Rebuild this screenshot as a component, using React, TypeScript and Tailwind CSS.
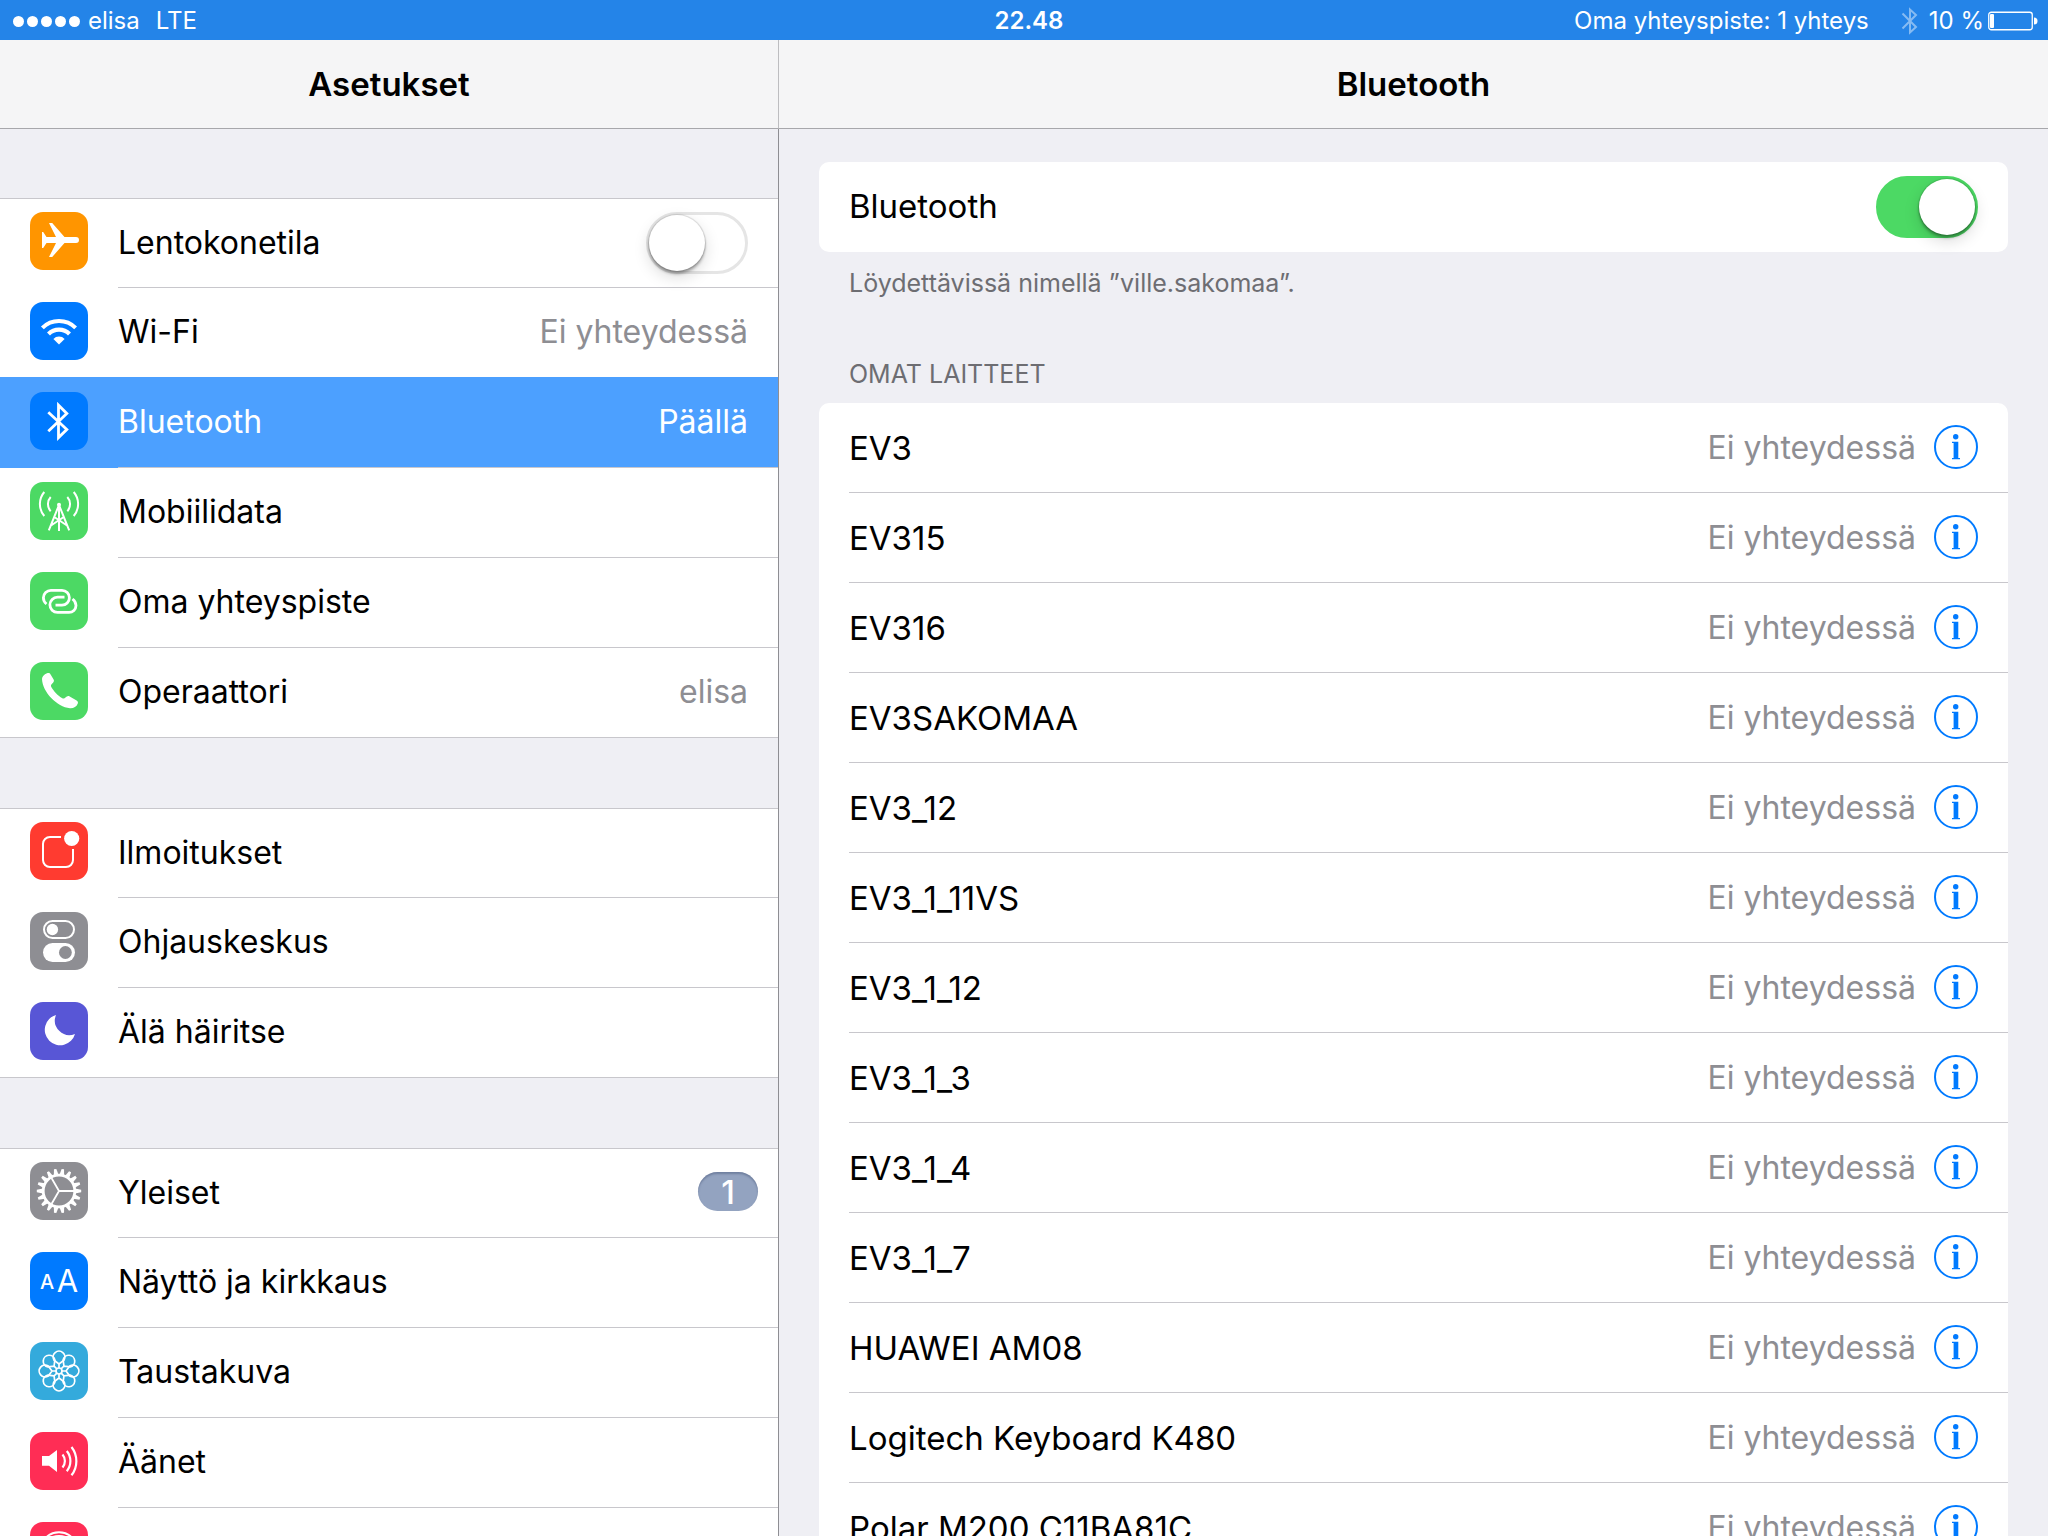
import React, { type ReactNode } from 'react';

const stroke = { fill: 'none', stroke: 'white' } as const;

function Plane() {
  return <path fill="white" d="M12 20h1.2l3.3 5H26L19 11h3.2l12.3 14h11.5a3 3 0 0 1 0 6H34.500L22.200 45H19l7-14h-9.500l-3.300 5H12z" />;
}

function Wifi() {
  return (
    <g>
      <path {...stroke} strokeWidth="4" d="M12.400 25.900a23.500 23.500 0 0 1 33.200 0" />
      <path {...stroke} strokeWidth="4.200" d="M18.500 32a14.800 14.800 0 0 1 21 0" />
      <path fill="white" d="M23.400 36.900a8 8 0 0 1 11.200 0L29 42.500z" />
    </g>
  );
}

function Bluetooth() {
  return <path {...stroke} strokeWidth="2.800" d="M18.300 20.300 36.800 37.600 28.500 45.600V13.200l8.300 8.200L18.300 39.200" />;
}

function Antenna() {
  return (
    <g {...stroke} strokeWidth="2">
      <circle cx="29" cy="22.700" r="2" fill="white" stroke="none" />
      <path d="M29 23 18.800 48.300M29 23l10.200 25.300M29 23v26M21 43.500l12-8M37 43.500l-12-8" />
      <path d="M20.700 15a10.500 10.500 0 0 0 0 14.200M37.300 15a10.500 10.500 0 0 1 0 14.200" />
      <path d="M14.300 10a18.500 18.500 0 0 0 0 24M43.700 10a18.500 18.500 0 0 1 0 24" />
    </g>
  );
}

function Hotspot() {
  return (
    <g {...stroke} strokeWidth="2.800">
      <path d="M16.500 32c-2-1.500-3.100-3.700-3.100-6.200a7.500 7.500 0 0 1 7.500-7.400H32a7.400 7.400 0 0 1 0 14.800h-6.500" />
      <path d="M34.500 25.200h-7a7.600 7.600 0 0 0 0 15.200H39a7 7 0 0 0 7-6.900c0-3-1.500-5-3.500-6.500" />
    </g>
  );
}

function Phone() {
  return <path fill="white" d="M12 17C12 14.500 14 12.500 17 11.200C18.600 10.600 19.800 11 20.600 12.400L23.600 17.600C24.200 18.800 24 19.600 23.200 20.600L21.400 22.600C20.800 23.400 20.900 24.200 21.300 25C23.500 29 28 33.700 32.300 36.300C33.200 36.800 34 36.700 34.800 36.100L36.800 34.500C37.800 33.800 38.600 33.800 39.700 34.400L46.600 38.600C48 39.400 48.300 40.400 47.700 41.800C46.500 44.800 43.500 46.400 40 46.200C27 45 12.500 30 12 17Z" />;
}

function Notifications() {
  return (
    <g>
      <path {...stroke} strokeWidth="2" d="M31 15H20a7 7 0 0 0-7 7v16a7 7 0 0 0 7 7h16a7 7 0 0 0 7-7V27" />
      <circle cx="41.700" cy="16.500" r="7.600" fill="white" />
    </g>
  );
}

function ControlCenter() {
  return (
    <g>
      <rect {...stroke} strokeWidth="2" x="14" y="9" width="30" height="17" rx="8.500" />
      <circle cx="22.400" cy="17.500" r="5.700" fill="white" />
      <rect x="13" y="31" width="32" height="19" rx="9.500" fill="white" />
      <circle cx="35.400" cy="40.500" r="6.400" fill="#8e8e93" />
    </g>
  );
}

function Moon() {
  return <path fill="white" d="M26 13A15.400 15.400 0 1 0 45 32A14.600 14.600 0 0 1 26 13Z" />;
}

const teeth = Array.from({ length: 18 }, (_, i) => i * 20);

function Gear() {
  return (
    <g>
      <circle {...stroke} strokeWidth="2.800" cx="29" cy="29" r="15.800" />
      {teeth.map((a) => (
        <path key={a} fill="white" transform={`rotate(${a} 29 29)`} d="M45 26.600l6.200 1.200v2.400L45 31.400z" />
      ))}
      <path {...stroke} strokeWidth="1.800" d="M29 29h15M29 29l-7.500-13M29 29l-7.500 13" />
    </g>
  );
}

function TextSize() {
  return (
    <g fill="white" fontFamily="Inter, sans-serif" fontWeight="500">
      <text x="17" y="37" fontSize="20" textAnchor="middle">A</text>
      <text x="37.500" y="40" fontSize="31" fontWeight="400" textAnchor="middle">A</text>
    </g>
  );
}

const petals = Array.from({ length: 8 }, (_, i) => i * 45);

function Flower() {
  return (
    <g {...stroke} strokeWidth="1.700">
      <circle cx="29" cy="29" r="3" />
      {petals.map((a) => (
        <path key={a} transform={`rotate(${a} 29 29)`} d="M29 26V22L24 18.200A5.900 5.900 0 1 1 34 18.200L29 22" />
      ))}
    </g>
  );
}

function Sound() {
  return (
    <g>
      <path fill="white" d="M12 24h7l8-6v22l-8-6.300h-7z" />
      <path {...stroke} strokeWidth="2.200" d="M32.500 22.500a10 10 0 0 1 0 13M36.800 19a16 16 0 0 1 0 20.200M41.500 15a23 23 0 0 1 0 28.300" />
    </g>
  );
}

function Fingerprint() {
  return (
    <g {...stroke} strokeWidth="1.800">
      <path d="M17 14.500a19 19 0 0 1 24 0M14 22a18 18 0 0 1 30 0M15 32a14 14 0 0 1 28 0M20 36a9 9 0 0 1 18-4v8M29 32v12" />
    </g>
  );
}

type Item = {
  label: string;
  color: string;
  icon: ReactNode;
  value?: string;
  badge?: number;
  toggle?: boolean;
  selected?: boolean;
  iconOnly?: boolean;
};

const groups: Item[][] = [
  [
    { label: 'Lentokonetila', color: 'bg-[#ff9500]', icon: <Plane />, toggle: true },
    { label: 'Wi-Fi', color: 'bg-[#007aff]', icon: <Wifi />, value: 'Ei yhteydessä' },
    { label: 'Bluetooth', color: 'bg-[#007aff]', icon: <Bluetooth />, value: 'Päällä', selected: true },
    { label: 'Mobiilidata', color: 'bg-[#4cd964]', icon: <Antenna /> },
    { label: 'Oma yhteyspiste', color: 'bg-[#4cd964]', icon: <Hotspot /> },
    { label: 'Operaattori', color: 'bg-[#4cd964]', icon: <Phone />, value: 'elisa' },
  ],
  [
    { label: 'Ilmoitukset', color: 'bg-[#ff3b30]', icon: <Notifications /> },
    { label: 'Ohjauskeskus', color: 'bg-[#8e8e93]', icon: <ControlCenter /> },
    { label: 'Älä häiritse', color: 'bg-[#5856d6]', icon: <Moon /> },
  ],
  [
    { label: 'Yleiset', color: 'bg-[#8e8e93]', icon: <Gear />, badge: 1 },
    { label: 'Näyttö ja kirkkaus', color: 'bg-[#007aff]', icon: <TextSize /> },
    { label: 'Taustakuva', color: 'bg-[#34aadc]', icon: <Flower /> },
    { label: 'Äänet', color: 'bg-[#ff2d55]', icon: <Sound /> },
    { label: 'Touch ID', color: 'bg-[#ff2d55]', icon: <Fingerprint />, iconOnly: true },
  ],
];

const devices = [
  'EV3', 'EV315', 'EV316', 'EV3SAKOMAA', 'EV3_12', 'EV3_1_11VS', 'EV3_1_12', 'EV3_1_3',
  'EV3_1_4', 'EV3_1_7', 'HUAWEI AM08', 'Logitech Keyboard K480', 'Polar M200 C11BA81C',
];

function Switch({ id, on = false }: { id: string; on?: boolean }) {
  return (
    <input
      id={id}
      type="checkbox"
      role="switch"
      defaultChecked={on}
      className="flex h-[62px] w-[102px] shrink-0 cursor-pointer appearance-none items-center rounded-full border-[3px] border-[#e5e5e5] bg-white before:size-14 before:rounded-full before:bg-white before:shadow-[0_0_1px_1px_rgba(0,0,0,0.12),0_3px_3px_rgba(0,0,0,0.3),0_6px_16px_rgba(0,0,0,0.15)] checked:justify-end checked:border-[#4cd964] checked:bg-[#4cd964]"
    />
  );
}

function Row({ item, first, last }: { item: Item; first: boolean; last: boolean }) {
  const tone = item.selected ? 'bg-[#4ca0ff] text-white shadow-[0_-1px_0_#4ca0ff]' : 'bg-white text-black';
  const edges = `${first ? 'border-t border-[#c8c7cc]' : ''} ${last ? 'border-b border-[#c8c7cc]' : ''}`;
  const body = (
    <>
      <svg viewBox="0 0 58 58" className={`${first ? 'mb-[5px]' : 'mb-1'} size-[58px] shrink-0 rounded-[13px] ${item.color}`} aria-hidden="true">
        {item.icon}
      </svg>
      <span className={`flex min-w-0 flex-1 items-center self-stretch pb-px ${last ? '' : 'border-b border-[#c8c7cc]'}`}>
        {item.toggle ? (
          <label htmlFor="airplane" className="flex-1">{item.label}</label>
        ) : (
          <span className="flex-1">{item.iconOnly ? null : item.label}</span>
        )}
        {item.value && <span className={`pr-[30px] ${item.selected ? '' : 'text-[#8e8e93]'}`}>{item.value}</span>}
        {item.badge && (
          <span className="mr-5 mb-0.5 flex h-[39px] w-[60px] items-center justify-center rounded-full bg-[#93a3c0] text-[33px] font-medium text-white shadow-[inset_0_2px_2px_rgba(60,75,110,0.4)]">
            {item.badge}
          </span>
        )}
        {item.toggle && <span className="pr-[30px]"><Switch id="airplane" /></span>}
      </span>
    </>
  );
  const cls = `flex h-[90px] items-center gap-[30px] pl-[30px] ${tone} ${edges}`;
  return (
    <li>
      {item.toggle ? (
        <div className={cls}>{body}</div>
      ) : (
        <a href="#" aria-label={item.iconOnly ? item.label : undefined} aria-current={item.selected ? 'page' : undefined} className={item.selected ? `relative ${cls}` : cls}>
          {body}
        </a>
      )}
    </li>
  );
}

function StatusBar() {
  return (
    <div className="grid h-10 shrink-0 grid-cols-[1fr_auto_1fr] items-center bg-[#2484e8] pt-0.5 text-2xl leading-[38px] text-white">
      <div className="flex items-center pl-[13px]">
        <span className="mr-2 flex gap-[3px]">
          {[0, 1, 2, 3, 4].map((i) => <i key={i} className="size-[11px] rounded-full bg-white" />)}
        </span>
        <span className="mr-4">elisa</span>
        <span>LTE</span>
      </div>
      <div className="pl-2.5 font-semibold">22.48</div>
      <div className="flex items-center justify-end pr-2.5">
        <span className="mr-8">Oma yhteyspiste: 1 yhteys</span>
        <svg viewBox="0 0 18 28" className="mr-2.5 h-7 w-[18px] text-white/45" fill="none" stroke="currentColor" strokeWidth="2" aria-hidden="true">
          <path d="M1.500 6.500 15 20 9 25.500V2.500L15 8 1.500 21.500" />
        </svg>
        <span className="mr-1">10 %</span>
        <svg viewBox="0 0 50 20" className="h-5 w-[50px]" aria-hidden="true">
          <rect x="0.750" y="1.250" width="43.500" height="17.500" rx="2.500" fill="none" stroke="white" strokeWidth="1.300" />
          <rect x="2" y="3" width="4" height="14" rx="1" fill="white" />
          <path d="M46 6.500a3.500 3.500 0 0 1 0 7z" fill="white" />
        </svg>
      </div>
    </div>
  );
}

function InfoButton({ device }: { device: string }) {
  return (
    <button type="button" aria-label={`Lisätietoja: ${device}`} className="mb-0.5 shrink-0">
      <svg viewBox="0 0 44 44" className="size-11" fill="#007aff" aria-hidden="true">
        <circle cx="22" cy="22" r="21" fill="none" stroke="#007aff" strokeWidth="2" />
        <circle cx="21.700" cy="11.700" r="2.700" />
        <path d="M18 16.700h6.300v16.300h1.700v1.300h-8v-1.300h1.600V18H18z" />
      </svg>
    </button>
  );
}

export default function App() {
  return (
    <div className="flex h-screen flex-col overflow-hidden bg-[#efeff4] font-['Inter',sans-serif] text-[33px] leading-10 text-black">
      <StatusBar />
      <div className="flex min-h-0 flex-1">
        <nav className="flex w-[779px] shrink-0 flex-col" aria-label="Asetukset">
          <header className="flex h-[89px] shrink-0 items-center justify-center border-r border-b border-r-[#bdbdc0] border-b-[#a7a7ab] bg-[#f5f5f6]">
            <h1 className="font-semibold">Asetukset</h1>
          </header>
          <div className="flex min-h-0 flex-1 flex-col gap-[70px] overflow-y-auto border-r border-[#8e8e93] pt-[69px] text-[32px] [scrollbar-width:none]">
            {groups.map((group, g) => (
              <ul key={g}>
                {group.map((item, i) => (
                  <Row key={item.label} item={item} first={i === 0} last={i === group.length - 1} />
                ))}
              </ul>
            ))}
          </div>
        </nav>
        <main className="flex min-w-0 flex-1 flex-col">
          <header className="flex h-[89px] shrink-0 items-center justify-center border-b border-[#a7a7ab] bg-[#f5f5f6]">
            <h2 className="font-semibold">Bluetooth</h2>
          </header>
          <div className="min-h-0 flex-1 overflow-y-auto px-10 pt-[33px] [scrollbar-width:none]">
            <div className="flex h-[90px] items-center rounded-[10px] bg-white px-[30px]">
              <label htmlFor="bluetooth" className="flex-1 pb-0.5">Bluetooth</label>
              <Switch id="bluetooth" on />
            </div>
            <p className="px-[30px] pt-[15px] text-[25px] leading-8 text-[#6d6d72]">Löydettävissä nimellä ”ville.sakomaa”.</p>
            <h3 className="px-[30px] pt-[59px] pb-[13px] text-[25px] leading-8 text-[#6d6d72]">OMAT LAITTEET</h3>
            <ul className="rounded-t-[10px] bg-white pl-[30px]">
              {devices.map((device) => (
                <li key={device} className="flex h-[90px] items-center border-b border-[#c8c7cc] pr-[30px]">
                  <span className="flex-1">{device}</span>
                  <span className="mr-[18px] text-[32px] text-[#8e8e93]">Ei yhteydessä</span>
                  <InfoButton device={device} />
                </li>
              ))}
            </ul>
          </div>
        </main>
      </div>
    </div>
  );
}
